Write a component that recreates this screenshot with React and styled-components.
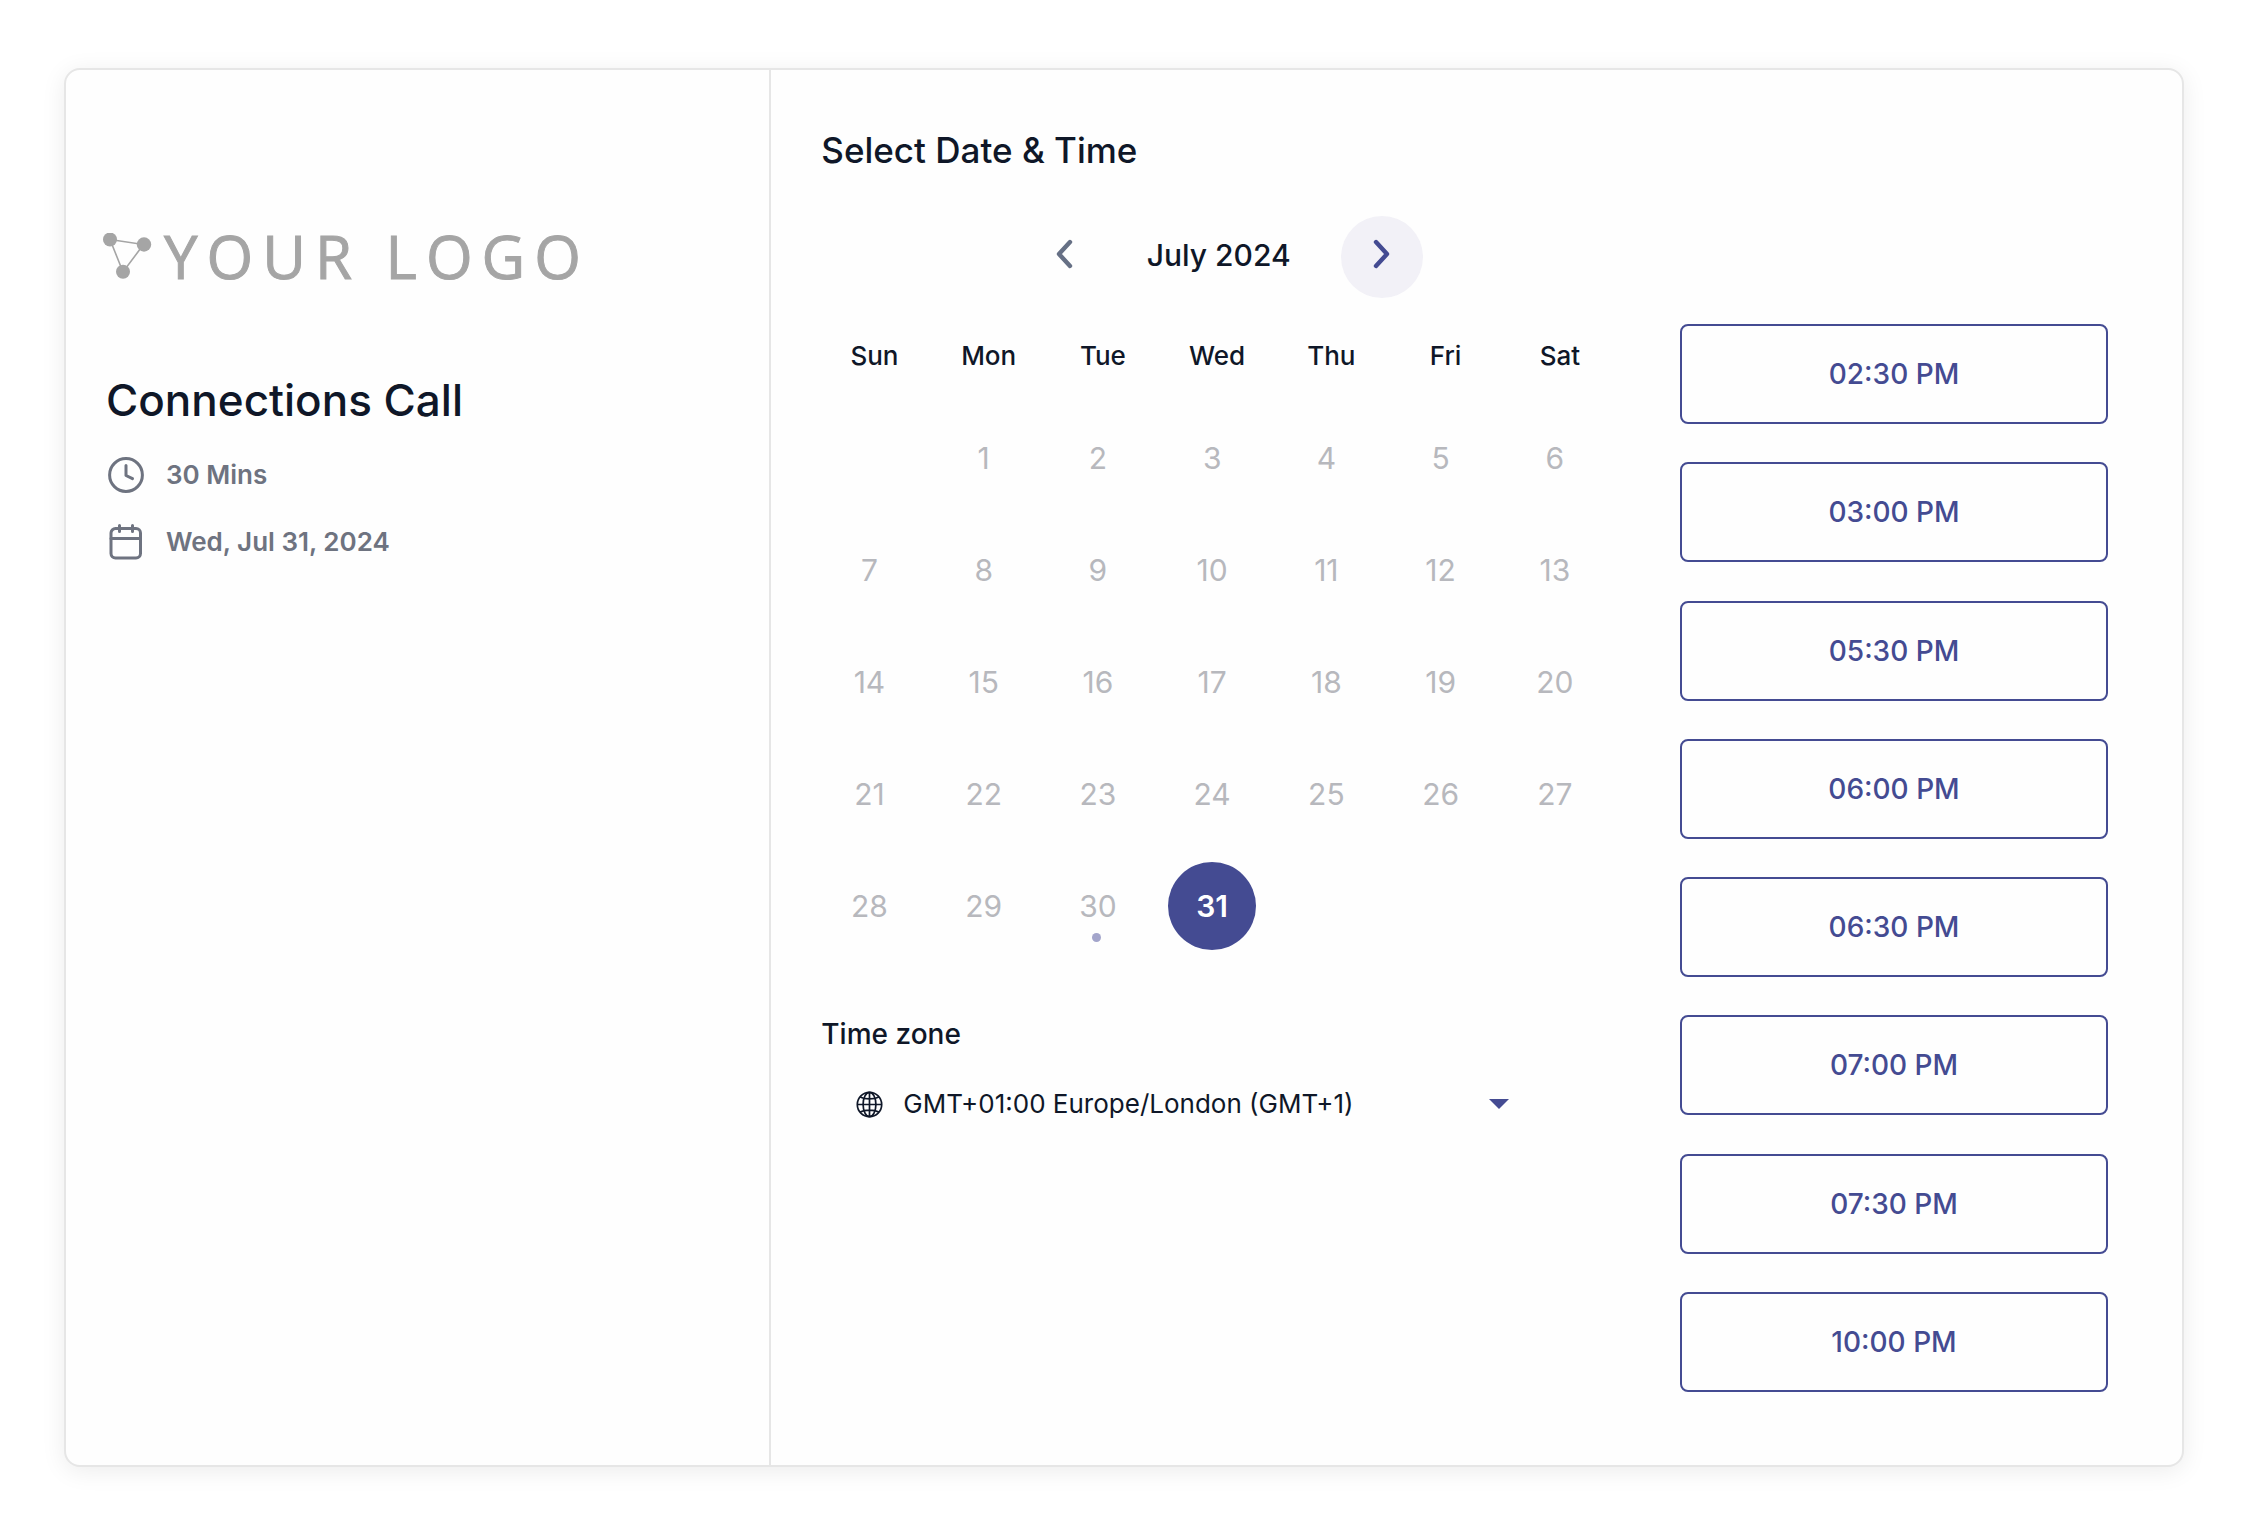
import React, { useState } from "react";
import styled, { createGlobalStyle } from "styled-components";

const ink = "#0f1728";
const brand = "#444b92";

const GlobalStyle = createGlobalStyle`
  *, *::before, *::after { box-sizing: border-box; }
  body { margin: 0; background: #fff; color: ${ink}; font-family: Inter, "Liberation Sans", sans-serif; }
  h1, h2, h3, p, ul { margin: 0; padding: 0; }
  button, select { font: inherit; color: inherit; background: none; border: 0; padding: 0; cursor: pointer; }
`;

const Page = styled.div`
  display: grid;
  min-height: 100vh;
  padding: 68px 61px 69px 64px;
`;

const Card = styled.main`
  display: grid;
  grid-template-columns: minmax(0, 1fr) minmax(0, 2fr);
  border: 2px solid #e6e6e6;
  border-radius: 16px;
  background: #fefefe;
  box-shadow: 0 4px 24px rgba(0, 0, 0, 0.08);
`;

const Summary = styled.aside`
  padding: 156px 37px 40px;
  border-right: 2px solid #e6e6e6;
`;

const Logo = styled.div`
  display: flex;
  align-items: center;
  gap: 12px;
  color: #a5a5a5;
  font: 400 60px/60px "Open Sans", "Noto Sans", sans-serif;
  letter-spacing: 9px;
  -webkit-text-stroke: 1px #a5a5a5;
  white-space: nowrap;
`;

const EventTitle = styled.h1`
  margin: 87px 0 30px;
  padding-left: 3px;
  font-size: 44px;
  line-height: 54px;
  font-weight: 500;
`;

const Details = styled.ul`
  display: grid;
  gap: 31px;
  padding-left: 3px;
  list-style: none;
`;

const Detail = styled.li`
  display: flex;
  align-items: center;
  gap: 22px;
  color: #6e7380;
  font-size: 26px;
  line-height: 36px;
  font-weight: 600;
`;

const Booking = styled.section`
  display: grid;
  grid-template-columns: minmax(0, 1fr) 428px;
  grid-template-rows: auto 1fr;
  column-gap: 45px;
  padding: 58px 74px 73px 41px;
`;

const BookingTitle = styled.h2`
  grid-column: 1 / -1;
  padding-left: 9px;
  font-size: 35px;
  line-height: 44px;
  font-weight: 500;
`;

const Picker = styled.div`
  padding-top: 44px;
`;

const MonthNav = styled.div`
  display: flex;
  align-items: center;
  justify-content: center;
  gap: 42px;
  padding-right: 2px;
`;

const MonthButton = styled.button`
  display: grid;
  place-items: center;
  width: 82px;
  height: 82px;
  padding-bottom: 6px;
  border-radius: 50%;
  background: ${(p) => (p.$active ? "#f2f1f7" : "transparent")};
  color: ${(p) => (p.$active ? brand : "#667085")};
`;

const MonthName = styled.h3`
  padding: 0 8px 4px 0;
  font-size: 30px;
  line-height: 36px;
  font-weight: 500;
`;

const Calendar = styled.table`
  width: calc(100% - 23px);
  margin-top: 12px;
  border-collapse: collapse;
  table-layout: fixed;
`;

const Weekday = styled.th`
  height: 92px;
  padding: 0 0 2px 10px;
  font-size: 26px;
  font-weight: 500;
`;

const DayCell = styled.td`
  height: 112px;
  padding: 0;
`;

const Day = styled.button`
  position: relative;
  display: block;
  width: 88px;
  height: 88px;
  margin: 0 auto;
  border-radius: 50%;
  background: ${(p) => (p.$selected ? brand : "transparent")};
  color: ${(p) => (p.$selected ? "#fff" : "#b7b8bd")};
  font-size: 30px;
  font-weight: ${(p) => (p.$selected ? 600 : 400)};
`;

const TodayDot = styled.span`
  position: absolute;
  bottom: 8px;
  left: 38px;
  width: 9px;
  height: 9px;
  border-radius: 50%;
  background: #a3a5cb;
`;

const ZoneLabel = styled.label`
  display: block;
  margin-top: 55px;
  padding-left: 9px;
  font-size: 28px;
  line-height: 34px;
  font-weight: 500;
`;

const ZoneField = styled.div`
  display: flex;
  align-items: center;
  margin-top: 27px;
  padding: 0 126px 0 44px;
`;

const ZoneSelect = styled.select`
  flex: 1;
  min-width: 0;
  height: 52px;
  margin-left: 20px;
  padding-bottom: 2px;
  appearance: none;
  font-size: 26px;
`;

const Slots = styled.div`
  display: flex;
  flex-direction: column;
  justify-content: space-between;
  gap: 20px;
  padding-top: 152px;
`;

const Slot = styled.button`
  height: 100px;
  border: 2px solid ${brand};
  border-radius: 8px;
  color: ${brand};
  font-size: 28px;
  font-weight: 500;
`;

const LogoMark = () => (
  <svg width="49" height="46" viewBox="0 0 49 46" fill="currentColor" aria-hidden="true">
    <path d="M7 6.5 40.5 11.5 20 39Z" fill="none" stroke="currentColor" strokeWidth="1.6" />
    <circle cx="7" cy="6.5" r="7" />
    <circle cx="41" cy="11.5" r="7.2" />
    <circle cx="20" cy="38.7" r="7" />
  </svg>
);

const ClockIcon = () => (
  <svg width="38" height="36" viewBox="0 0 38 36" fill="none" stroke="currentColor" strokeWidth="3" strokeLinecap="round" strokeLinejoin="round" aria-hidden="true">
    <circle cx="20" cy="18" r="16.4" />
    <path d="M20 8.5v10l6.5 3.2" />
  </svg>
);

const CalendarIcon = () => (
  <svg width="38" height="36" viewBox="0 0 38 36" fill="none" stroke="currentColor" strokeWidth="3" strokeLinecap="round" strokeLinejoin="round" aria-hidden="true">
    <rect x="5" y="4.5" width="29.5" height="29.5" rx="4.5" />
    <path d="M5 14.5h29.5M13.5 1.5v6M26.5 1.5v6" />
  </svg>
);

const Chevron = ({ d }) => (
  <svg width="18" height="30" viewBox="0 0 18 30" fill="none" stroke="currentColor" strokeWidth="4.4" strokeLinecap="round" strokeLinejoin="round" aria-hidden="true">
    <path d={d} />
  </svg>
);

const GlobeIcon = () => (
  <svg width="27" height="27" viewBox="0 0 27 27" fill="none" stroke="currentColor" strokeWidth="1.7" aria-hidden="true">
    <circle cx="13.5" cy="13.5" r="12.2" />
    <ellipse cx="13.5" cy="13.5" rx="6.4" ry="12.2" />
    <path d="M13.5 1.3v24.4M1.3 13.5h24.4M4.2 6c4.5 2.6 14.1 2.6 18.6 0M4.2 21c4.5-2.6 14.1-2.6 18.6 0" />
  </svg>
);

const CaretIcon = () => (
  <svg width="20" height="10" viewBox="0 0 20 10" fill={brand} aria-hidden="true">
    <path d="M0 0h20L10 10Z" />
  </svg>
);

const weekdays = ["Sun", "Mon", "Tue", "Wed", "Thu", "Fri", "Sat"];
const weeks = [0, 1, 2, 3, 4].map((w) => weekdays.map((_, d) => w * 7 + d));
const times = ["02:30 PM", "03:00 PM", "05:30 PM", "06:00 PM", "06:30 PM", "07:00 PM", "07:30 PM", "10:00 PM"];

export default function App() {
  const [selected, setSelected] = useState(31);
  return (
    <>
      <GlobalStyle />
      <Page>
        <Card>
          <Summary>
            <Logo>
              <LogoMark />
              <span>YOUR LOGO</span>
            </Logo>
            <EventTitle>Connections Call</EventTitle>
            <Details>
              <Detail><ClockIcon />30 Mins</Detail>
              <Detail><CalendarIcon />Wed, Jul 31, 2024</Detail>
            </Details>
          </Summary>
          <Booking>
            <BookingTitle>Select Date &amp; Time</BookingTitle>
            <Picker>
              <MonthNav>
                <MonthButton type="button" aria-label="Previous month">
                  <Chevron d="M15 3 4 15l11 12" />
                </MonthButton>
                <MonthName>July 2024</MonthName>
                <MonthButton type="button" aria-label="Next month" $active>
                  <Chevron d="M3 3l11 12L3 27" />
                </MonthButton>
              </MonthNav>
              <Calendar>
                <thead>
                  <tr>{weekdays.map((d) => <Weekday key={d} scope="col">{d}</Weekday>)}</tr>
                </thead>
                <tbody>
                  {weeks.map((week) => (
                    <tr key={week[0]}>
                      {week.map((n) => (
                        <DayCell key={n}>
                          {n > 0 && n <= 31 && (
                            <Day type="button" $selected={n === selected} onClick={() => setSelected(n)}>
                              {n}
                              {n === 30 && <TodayDot />}
                            </Day>
                          )}
                        </DayCell>
                      ))}
                    </tr>
                  ))}
                </tbody>
              </Calendar>
              <ZoneLabel htmlFor="zone">Time zone</ZoneLabel>
              <ZoneField>
                <GlobeIcon />
                <ZoneSelect id="zone">
                  <option>GMT+01:00 Europe/London (GMT+1)</option>
                </ZoneSelect>
                <CaretIcon />
              </ZoneField>
            </Picker>
            <Slots>
              {times.map((t) => <Slot key={t} type="button">{t}</Slot>)}
            </Slots>
          </Booking>
        </Card>
      </Page>
    </>
  );
}
